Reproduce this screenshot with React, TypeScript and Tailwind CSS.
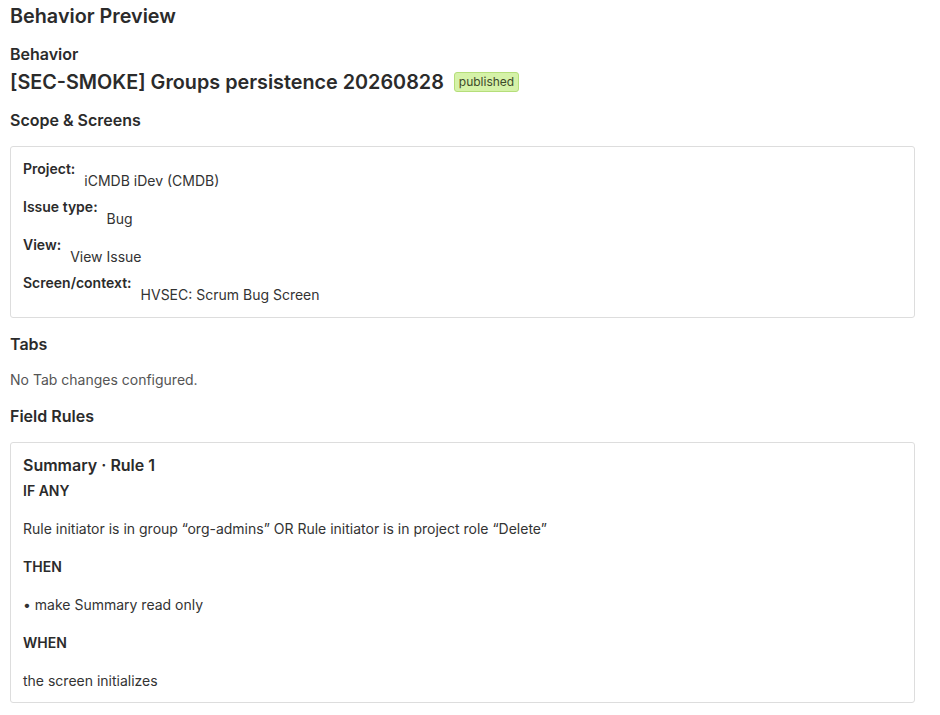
const scope = [
  { label: "Project:", value: "iCMDB iDev (CMDB)" },
  { label: "Issue type:", value: "Bug" },
  { label: "View:", value: "View Issue" },
  { label: "Screen/context:", value: "HVSEC: Scrum Bug Screen" },
];

export default function App() {
  return (
    <div className="min-h-screen bg-white px-[10px] pt-[4px] text-[#2b2b2b] font-['Inter',sans-serif]">
      <h1 className="text-[19.8px] font-semibold leading-[24px]">Behavior Preview</h1>

      <h3 className="mt-[16px] text-[16px] font-semibold leading-[20px]">Behavior</h3>
      <div className="mt-[5px] flex items-center gap-[10px]">
        <h2 className="text-[19.8px] font-semibold leading-[26px]">[SEC-SMOKE] Groups persistence 20260828</h2>
        <span className="rounded-[3px] border border-[#b5de7a] bg-[#d5f2a8] px-[4px] text-[12px] leading-[18px] text-[#3d4a2a]">
          published
        </span>
      </div>

      <h3 className="mt-[15px] text-[16px] font-semibold leading-[20px]">Scope &amp; Screens</h3>
      <div className="mt-[16px] w-[905px] rounded-[3px] border border-[#dddddd] px-[12px] py-[12px]">
        <div className="flex flex-col gap-[6px]">
          {scope.map((row) => (
            <div key={row.label} className="flex gap-[9px] text-[14px] leading-[20px]">
              <span className="font-semibold">{row.label}</span>
              <span className="mt-[12px] text-[#333]">{row.value}</span>
            </div>
          ))}
        </div>
      </div>

      <h3 className="mt-[16px] text-[16px] font-semibold leading-[20px]">Tabs</h3>
      <p className="mt-[16px] text-[14px] leading-[20px] text-[#555]">No Tab changes configured.</p>

      <h3 className="mt-[16px] text-[16px] font-semibold leading-[20px]">Field Rules</h3>
      <div className="mt-[16px] w-[905px] rounded-[3px] border border-[#dddddd] px-[12px] pt-[12px] pb-[11px] text-[14px] leading-[20px]">
        <h4 className="text-[16px] font-semibold leading-[20px]">Summary · Rule 1</h4>
        <p className="mt-[6px] font-semibold">IF ANY</p>
        <p className="mt-[18px] text-[#333]">
          Rule initiator is in group “org-admins” OR Rule initiator is in project role “Delete”
        </p>
        <p className="mt-[18px] font-semibold">THEN</p>
        <p className="mt-[18px] text-[#333]">• make Summary read only</p>
        <p className="mt-[18px] font-semibold">WHEN</p>
        <p className="mt-[18px] text-[#333]">the screen initializes</p>
      </div>
    </div>
  );
}
